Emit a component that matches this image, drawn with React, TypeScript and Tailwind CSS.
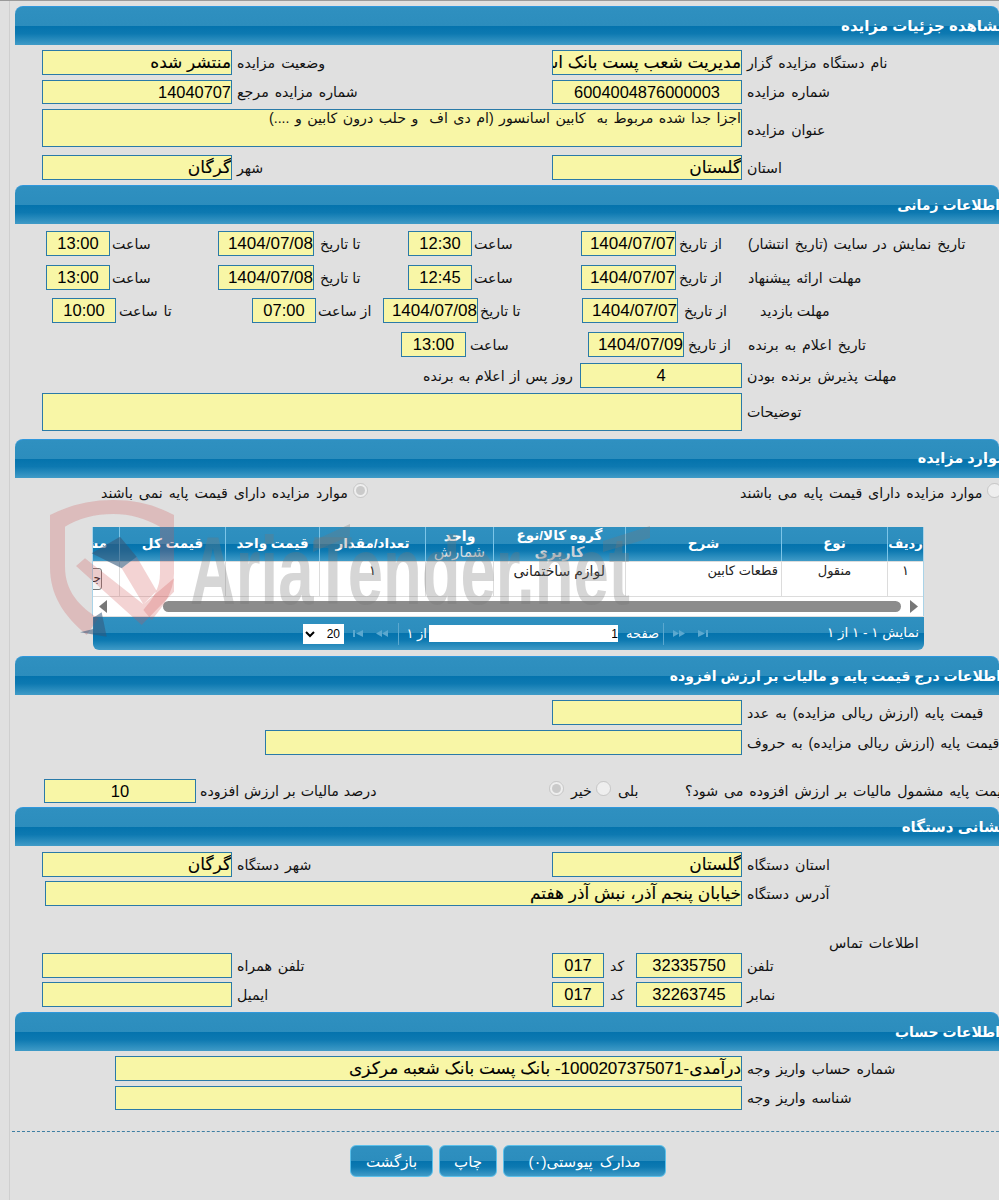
import React from "react";

const headerBg = "bg-[linear-gradient(to_bottom,#2f90c0_0%,#2c8dbd_49%,#0473ad_50%,#0d79b1_70%,#409bc7_100%)]";
const fa = "text-[17px] [-webkit-text-stroke:0.12px_black]";

function Head({ title, c, t }: { title: string; c: string; t: string }) {
  return (
    <div className={`ml-[15px] h-[39px] rounded-t-[8px] border-t border-[#2f97dc] overflow-hidden flex justify-end items-center ${headerBg} ${c}`}>
      <span dir="rtl" className={`text-white font-bold whitespace-nowrap ${t}`}>{title}</span>
    </div>
  );
}

function I({ c, v = "", center = false, t = "text-[17px]" }: { c: string; v?: string; center?: boolean; t?: string }) {
  return (
    <input
      readOnly
      dir="rtl"
      value={v}
      className={`shrink-0 bg-[#f8f6a6] border border-[#2a7aa8] leading-none text-black outline-none px-0 ${t} ${center ? "text-center" : "text-right"} ${c}`}
    />
  );
}

function L({ c, s = "[word-spacing:2px]", children }: { c: string; s?: string; children: React.ReactNode }) {
  return (
    <span dir="rtl" className={`shrink-0 text-left text-[14.2px] pt-[2px] text-[#111] whitespace-nowrap ${s} ${c}`}>
      {children}
    </span>
  );
}

function Area({ c, v = "" }: { c: string; v?: string }) {
  return (
    <textarea
      readOnly
      dir="rtl"
      value={v}
      className={`shrink-0 resize-none overflow-hidden bg-[#f8f6a6] border border-[#2a7aa8] text-[14.2px] [word-spacing:1.5px] leading-[17px] text-[#111] outline-none ${c}`}
    />
  );
}

function Row({ c, children }: { c: string; children: React.ReactNode }) {
  return <div className={`flex items-center whitespace-nowrap ${c}`}>{children}</div>;
}

function Th({ c, children }: { c: string; children: React.ReactNode }) {
  return (
    <div dir="rtl" className={`shrink-0 h-full overflow-hidden flex flex-col justify-center border-l border-[#7cc5e8] text-white font-bold text-[13.5px] leading-[16px] whitespace-nowrap ${c}`}>
      {children}
    </div>
  );
}

function Td({ c, children }: { c: string; children?: React.ReactNode }) {
  return (
    <div dir="rtl" className={`shrink-0 h-full overflow-hidden border-l border-[#dcdcdc] leading-[16px] text-[#222] whitespace-nowrap ${c}`}>
      {children}
    </div>
  );
}

function PagerIcon({ flip = false, bar = false }: { flip?: boolean; bar?: boolean }) {
  return (
    <svg width="14" height="9" viewBox="0 0 14 9" className={`shrink-0 ${flip ? "-scale-x-100" : ""}`} fill="#5ba8cf">
      {bar ? (
        <>
          <rect x="1" y="1" width="2" height="7" />
          <path d="M11 1 L4 4.5 L11 8 Z" />
        </>
      ) : (
        <>
          <path d="M7 1 L1 4.5 L7 8 Z" />
          <path d="M13 1 L7 4.5 L13 8 Z" />
        </>
      )}
    </svg>
  );
}

function Watermark() {
  return (
    <>
      <svg width="150" height="155" viewBox="0 0 450 465" className="absolute left-[40px] top-[494px] pointer-events-none">
        <path
          d="M30 60 C90 30 150 15 220 15 C290 15 345 30 402 60 L402 235 C402 290 370 335 335 375 L310 345 C340 310 360 280 360 235 L360 95 C315 70 270 57 220 57 C165 57 115 70 75 95 L75 215 C75 290 120 335 175 370 L140 420 C70 360 30 300 30 215 Z"
          fill="#d05050"
          fillOpacity="0.25"
        />
        <path d="M108 213 L135 190 L310 328 L350 288 L290 185 L245 220 L310 328 L402 250 L402 290 L305 390 Z" fill="#d05050" fillOpacity="0.25" />
        <path d="M155 175 L240 125 L290 185 L245 220 Z" fill="#35587a" fillOpacity="0.6" />
        <path d="M160 368 L185 352 L200 425 L120 412 L160 402 Z" fill="#35587a" fillOpacity="0.55" />
      </svg>
      <svg width="480" height="100" viewBox="0 0 480 100" className="absolute left-[180px] top-[515px] pointer-events-none">
        <text x="10" y="88" fontFamily="'Liberation Sans', sans-serif" fontWeight="700" fontSize="96" textLength="440" lengthAdjust="spacingAndGlyphs" fill="#777" fillOpacity="0.3">
          AriaTender.net
        </text>
        <path d="M133 25 L170 8 L170 20 L133 36 Z" fill="#777" fillOpacity="0.3" />
        <path d="M423 25 L470 10 L470 22 L423 36 Z" fill="#777" fillOpacity="0.3" />
      </svg>
    </>
  );
}

export default function App() {
  return (
    <div dir="ltr" className="relative w-[999px] h-[1200px] overflow-hidden bg-[#e0e0e0] border-t border-[#9a9a9a] font-['Liberation_Sans','DejaVu_Sans',sans-serif]">
      <div className="absolute left-[9px] top-0 bottom-0 w-px bg-[#cfcfcf]" />

      <Head title="مشاهده جزئیات مزایده" c="mt-[5px]" t="text-[15px] -mr-[8px]" />
      <Row c="mt-[5px] h-[25px]">
        <I c="ml-[42px] w-[190px] h-full" v="منتشر شده" t={fa} />
        <L c="w-[320px] pl-[5px]">وضعیت مزایده</L>
        <I c="w-[190px] h-full" v="مدیریت شعب پست بانک استان گلستان" t={fa} />
        <L c="pl-[5px]">نام دستگاه مزایده گزار</L>
      </Row>
      <Row c="mt-[5px] h-[24px]">
        <I c="ml-[42px] w-[190px] h-full" v="14040707" t="text-[16.4px]" />
        <L c="w-[320px] pl-[5px]">شماره مزایده مرجع</L>
        <I c="w-[190px] h-full" v="6004004876000003" center t="text-[16.4px]" />
        <L c="pl-[5px]">شماره مزایده</L>
      </Row>
      <Row c="mt-[5px] h-[38px]">
        <Area c="ml-[42px] w-[700px] h-full" v="اجزا جدا شده مربوط به  کابین اسانسور (ام دی اف  و حلب درون کابین و ....)" />
        <L c="pl-[5px] mt-[4px]">عنوان مزایده</L>
      </Row>
      <Row c="mt-[8px] h-[25px]">
        <I c="ml-[42px] w-[190px] h-full" v="گرگان" t={fa} />
        <L c="w-[320px] pl-[5px]">شهر</L>
        <I c="w-[190px] h-full" v="گلستان" t={fa} />
        <L c="pl-[5px]">استان</L>
      </Row>

      <Head title="اطلاعات زمانی" c="mt-[5px]" t="text-[14px] -mr-[1px]" />
      <Row c="mt-[7px] h-[25px]">
        <I c="ml-[46px] w-[64px] h-full" v="13:00" center t="text-[16.5px]" />
        <L c="w-[108px] pl-[2px]">ساعت</L>
        <I c="w-[96px] h-full" v="1404/07/08" />
        <L c="w-[94px] pl-[6px]" s="[word-spacing:0px]">تا تاریخ</L>
        <I c="w-[64px] h-full" v="12:30" center t="text-[16.5px]" />
        <L c="w-[109px] pl-[2px]">ساعت</L>
        <I c="w-[95px] h-full" v="1404/07/07" />
        <L c="w-[72px] pl-[3px]" s="[word-spacing:0px]">از تاریخ</L>
        <L c="">تاریخ نمایش در سایت (تاریخ انتشار)</L>
      </Row>
      <Row c="mt-[9px] h-[25px]">
        <I c="ml-[46px] w-[64px] h-full" v="13:00" center t="text-[16.5px]" />
        <L c="w-[108px] pl-[2px]">ساعت</L>
        <I c="w-[96px] h-full" v="1404/07/08" />
        <L c="w-[94px] pl-[6px]" s="[word-spacing:0px]">تا تاریخ</L>
        <I c="w-[64px] h-full" v="12:45" center t="text-[16.5px]" />
        <L c="w-[109px] pl-[2px]">ساعت</L>
        <I c="w-[95px] h-full" v="1404/07/07" />
        <L c="w-[72px] pl-[3px]" s="[word-spacing:0px]">از تاریخ</L>
        <L c="">مهلت ارائه پیشنهاد</L>
      </Row>
      <Row c="mt-[8px] h-[25px]">
        <I c="ml-[52px] w-[64px] h-full" v="10:00" center t="text-[16.5px]" />
        <L c="w-[136px] pl-[3px]">تا ساعت</L>
        <I c="w-[64px] h-full" v="07:00" center t="text-[16.5px]" />
        <L c="w-[67px] pl-[2px]" s="[word-spacing:0px]">از ساعت</L>
        <I c="w-[95px] h-full" v="1404/07/08" />
        <L c="w-[104px] pl-[2px]" s="[word-spacing:0px]">تا تاریخ</L>
        <I c="w-[96px] h-full" v="1404/07/07" />
        <L c="w-[82px] pl-[6px]" s="[word-spacing:0px]">از تاریخ</L>
        <L c="" s="[word-spacing:0px]">مهلت بازدید</L>
      </Row>
      <Row c="mt-[9px] h-[25px]">
        <I c="ml-[401px] w-[65px] h-full" v="13:00" center t="text-[16.5px]" />
        <L c="w-[122px] pl-[4px]">ساعت</L>
        <I c="w-[96px] h-full" v="1404/07/09" />
        <L c="w-[64px] pl-[4px]" s="[word-spacing:0px]">از تاریخ</L>
        <L c="">تاریخ اعلام به برنده</L>
      </Row>
      <Row c="mt-[6px] h-[25px]">
        <L c="ml-[423px] w-[157px]" s="[word-spacing:1px]">روز پس از اعلام به برنده</L>
        <I c="w-[162px] h-full" v="4" center t="text-[16.5px]" />
        <L c="pl-[5px]">مهلت پذیرش برنده بودن</L>
      </Row>
      <Row c="mt-[5px] h-[38px]">
        <Area c="ml-[42px] w-[700px] h-full" />
        <L c="pl-[5px]">توضیحات</L>
      </Row>

      <Head title="موارد مزایده" c="mt-[8px]" t="text-[14.5px] -mr-[7px]" />
      <Row c="mt-[5px] h-[20px]">
        <L c="ml-[101px] w-[252px]">موارد مزایده دارای قیمت پایه نمی باشند</L>
        <input type="radio" disabled defaultChecked className="shrink-0 w-[15px] h-[15px] m-0 -mt-[5px]" />
        <L c="ml-[372px] w-[247px]">موارد مزایده دارای قیمت پایه می باشند</L>
        <input type="radio" disabled className="shrink-0 w-[15px] h-[15px] m-0 -mt-[5px]" />
      </Row>

      <div className="mt-[24px] ml-[92px] w-[832px] border-x border-[#a9d3e8] bg-white">
        <div className={`flex h-[34px] ${headerBg}`}>
          <Th c="w-[26px] items-start pr-[12px] border-l-0"><span>مشاهده</span></Th>
          <Th c="w-[106px] items-center">قیمت کل</Th>
          <Th c="w-[94px] items-center">قیمت واحد</Th>
          <Th c="w-[106px] items-center">تعداد/مقدار</Th>
          <Th c="w-[68px] items-center"><span className="text-[14px]">واحد</span><span className="text-[#d3dce2] font-normal text-[15px]">شمارش</span></Th>
          <Th c="w-[132px] items-center"><span>گروه کالا/نوع</span><span className="text-[#c8d1d8] text-[14.5px]">کاربری</span></Th>
          <Th c="w-[156px] items-center">شرح</Th>
          <Th c="w-[106px] items-center">نوع</Th>
          <Th c="w-[36px] items-center"><span className="text-[13px]">ردیف</span></Th>
        </div>
        <div className="flex h-[36px] bg-white border-t border-b border-[#dcdcdc]">
          <Td c="w-[26px] border-l-0 pt-[6px]">
            <span className="block mr-[17px] w-[30px] h-[22px] overflow-hidden border border-[#777] rounded-[3px] bg-[#f4f4f4] text-[12px] leading-[18px] text-right">جزئیات</span>
          </Td>
          <Td c="w-[106px] text-[13px] pt-[1px]" />
          <Td c="w-[94px] text-[13px] pt-[1px]" />
          <Td c="w-[106px] text-center text-[13px] pt-[1px]">۱</Td>
          <Td c="w-[68px] text-[13px] pt-[1px]" />
          <Td c="w-[132px] pr-[20px] text-[14px] pt-[1px]">لوازم ساختمانی</Td>
          <Td c="w-[156px] pr-[3px] text-[13px] pt-[1px]">قطعات کابین</Td>
          <Td c="w-[106px] text-center text-[13px] pt-[1px]">منقول</Td>
          <Td c="w-[36px] text-center text-[13px] pt-[1px]">۱</Td>
        </div>
        <div className="flex items-center h-[19px] bg-white">
          <svg width="8" height="13" viewBox="0 0 8 13" className="ml-[6px] shrink-0"><path d="M8 0 L0 6.5 L8 13 Z" fill="#777" /></svg>
          <div className="ml-[56px] w-[738px] h-[11px] rounded-full bg-[#8c8c8c]" />
          <svg width="8" height="13" viewBox="0 0 8 13" className="ml-[9px] shrink-0"><path d="M0 0 L8 6.5 L0 13 Z" fill="#777" /></svg>
        </div>
      </div>
      <div className={`mt-[1px] ml-[93px] w-[831px] h-[33px] rounded-b-[6px] flex items-center text-white text-[13px] ${headerBg}`}>
        <select dir="rtl" defaultValue="20" className="ml-[210px] w-[41px] h-[20px] bg-white text-black text-[12px] border-0 outline-none">
          <option value="20">20</option>
        </select>
        <div className="ml-[8px] flex gap-[9px] items-center">
          <PagerIcon bar />
          <PagerIcon />
        </div>
        <div className="ml-[9px] w-px h-[22px] bg-[#5ba8cf]" />
        <span dir="rtl" className="ml-[5px] w-[25px] pr-[2px] text-[13px]">از ۱</span>
        <input readOnly value="1" dir="rtl" className="w-[189px] h-[17px] bg-white text-black text-[12px] text-left outline-none border-0 pl-[183px]" />
        <span dir="rtl" className="ml-[5px] w-[36px] text-[13px]">صفحه</span>
        <div className="ml-[4px] w-px h-[22px] bg-[#5ba8cf]" />
        <div className="ml-[8px] flex gap-[9px] items-center">
          <PagerIcon flip />
          <PagerIcon flip bar />
        </div>
        <span dir="rtl" className="ml-auto mr-[5px] text-[13.5px]">نمایش ۱ - ۱ از ۱</span>
      </div>

      <Head title="اطلاعات درج قیمت پایه و مالیات بر ارزش افزوده" c="mt-[6px]" t="text-[14px] -mr-[2px]" />
      <Row c="mt-[5px] h-[25px]">
        <I c="ml-[552px] w-[190px] h-full" />
        <L c="pl-[5px]">قیمت پایه (ارزش ریالی مزایده) به عدد</L>
      </Row>
      <Row c="mt-[5px] h-[25px]">
        <I c="ml-[265px] w-[477px] h-full" />
        <L c="pl-[5px]">قیمت پایه (ارزش ریالی مزایده) به حروف</L>
      </Row>
      <Row c="mt-[24px] h-[24px]">
        <I c="ml-[44px] w-[152px] h-full" v="10" center t="text-[16.5px]" />
        <L c="w-[353px] pl-[4px]" s="[word-spacing:1px]">درصد مالیات بر ارزش افزوده</L>
        <input type="radio" disabled defaultChecked className="shrink-0 w-[15px] h-[15px] m-0 -mt-[5px]" />
        <L c="w-[32px] pl-[7px]">خیر</L>
        <input type="radio" disabled className="shrink-0 w-[15px] h-[15px] m-0 -mt-[5px]" />
        <L c="w-[74px] pl-[7px]">بلی</L>
        <L c="">قیمت پایه مشمول مالیات بر ارزش افزوده می شود؟</L>
      </Row>

      <Head title="نشانی دستگاه" c="mt-[4px]" t="text-[15px] -mr-[6px]" />
      <Row c="mt-[6px] h-[25px]">
        <I c="ml-[42px] w-[190px] h-full" v="گرگان" t={fa} />
        <L c="w-[320px] pl-[5px]">شهر دستگاه</L>
        <I c="w-[190px] h-full" v="گلستان" t={fa} />
        <L c="pl-[5px]">استان دستگاه</L>
      </Row>
      <Row c="mt-[4px] h-[25px]">
        <I c="ml-[45px] w-[697px] h-full" v="خیابان پنجم آذر، نبش آذر هفتم" t={fa} />
        <L c="pl-[5px]">آدرس دستگاه</L>
      </Row>
      <Row c="mt-[26px] h-[21px]">
        <L c="ml-[829px]">اطلاعات تماس</L>
      </Row>
      <Row c="h-[25px]">
        <I c="ml-[42px] w-[190px] h-full" />
        <L c="w-[320px] pl-[5px]">تلفن همراه</L>
        <I c="w-[52px] h-full" v="017" center t="text-[16.5px]" />
        <L c="w-[32px] pl-[6px]">کد</L>
        <I c="w-[106px] h-full" v="32335750" center t="text-[16.5px]" />
        <L c="pl-[5px]">تلفن</L>
      </Row>
      <Row c="mt-[4px] h-[25px]">
        <I c="ml-[42px] w-[190px] h-full" />
        <L c="w-[320px] pl-[5px]">ایمیل</L>
        <I c="w-[52px] h-full" v="017" center t="text-[16.5px]" />
        <L c="w-[32px] pl-[6px]">کد</L>
        <I c="w-[106px] h-full" v="32263745" center t="text-[16.5px]" />
        <L c="pl-[5px]">نمابر</L>
      </Row>

      <Head title="اطلاعات حساب" c="mt-[5px]" t="text-[14px] -mr-[1px]" />
      <Row c="mt-[5px] h-[25px]">
        <I c="ml-[115px] w-[627px] h-full" v="درآمدی-1000207375071- بانک پست بانک شعبه مرکزی" t={fa} />
        <L c="pl-[5px]">شماره حساب واریز وجه</L>
      </Row>
      <Row c="mt-[5px] h-[24px]">
        <I c="ml-[115px] w-[627px] h-full" />
        <L c="pl-[5px]">شناسه واریز وجه</L>
      </Row>

      <div className="mt-[21px] ml-[12px] border-t border-dashed border-[#3f7fa3]" />

      <div className="mt-[13px] ml-[350px] flex gap-[6px]">
        {[
          ["بازگشت", "w-[83px]"],
          ["چاپ", "w-[58px]"],
          ["مدارک پیوستی(۰)", "w-[163px]"],
        ].map(([t, w]) => (
          <button key={t} dir="rtl" className={`h-[32px] rounded-[6px] border border-[#5cc0ea] text-white text-[15px] [word-spacing:3px] pt-[2px] ${headerBg} ${w}`}>
            {t}
          </button>
        ))}
      </div>

      <Watermark />
    </div>
  );
}
